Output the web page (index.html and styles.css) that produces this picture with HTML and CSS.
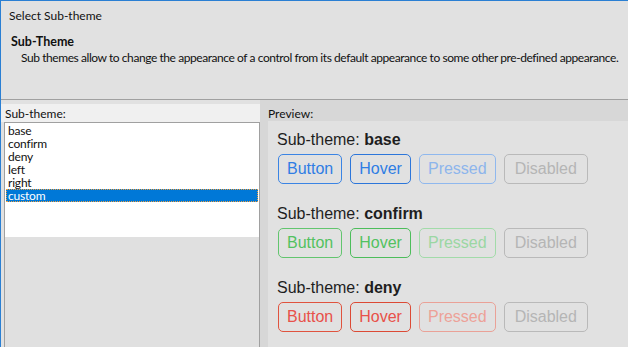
FILE: index.html
```html
<!DOCTYPE html>
<html>
<head>
<meta charset="utf-8">
<link rel="stylesheet" href="styles.css">
</head>
<body>
<div class="window">
  <header class="header">
    <div class="title">Select Sub-theme</div>
    <div class="heading">Sub-Theme</div>
    <div class="desc">Sub themes allow to change the appearance of a control from its default appearance to some other pre-defined appearance.</div>
  </header>
  <main class="main">
    <section class="left">
      <div class="label">Sub-theme:</div>
      <div class="listframe">
        <ul class="list">
          <li class="item">base</li>
          <li class="item">confirm</li>
          <li class="item">deny</li>
          <li class="item">left</li>
          <li class="item">right</li>
          <li class="item selected">custom</li>
        </ul>
      </div>
    </section>
    <section class="right">
      <div class="plabel">Preview:</div>
      <div class="preview">
        <div class="group base">
          <div class="gtitle">Sub-theme: <b>base</b></div>
          <div class="buttons">
            <span class="btn">Button</span>
            <span class="btn hover">Hover</span>
            <span class="btn pressed">Pressed</span>
            <span class="btn disabled">Disabled</span>
          </div>
        </div>
        <div class="group confirm">
          <div class="gtitle">Sub-theme: <b>confirm</b></div>
          <div class="buttons">
            <span class="btn">Button</span>
            <span class="btn hover">Hover</span>
            <span class="btn pressed">Pressed</span>
            <span class="btn disabled">Disabled</span>
          </div>
        </div>
        <div class="group deny">
          <div class="gtitle">Sub-theme: <b>deny</b></div>
          <div class="buttons">
            <span class="btn">Button</span>
            <span class="btn hover">Hover</span>
            <span class="btn pressed">Pressed</span>
            <span class="btn disabled">Disabled</span>
          </div>
        </div>
      </div>
    </section>
  </main>
</div>
</body>
</html>
```
FILE: styles.css
```css
* { box-sizing: border-box; }
html, body { margin: 0; padding: 0; }
body {
  width: 628px;
  height: 347px;
  overflow: hidden;
  background: #e1e1e1;
  font-family: "Lato", "Noto Sans", sans-serif;
  font-size: 12px;
  color: #111;
}
.window {
  height: 347px;
  border-top: 1px solid #2a7fd3;
  border-left: 1px solid #2a7fd3;
  display: flex;
  flex-direction: column;
}
.header {
  height: 99px;
  flex: none;
  border-bottom: 1px solid #a0a0a0;
  background: #e1e1e1;
  line-height: 15px;
}
.title { padding: 7px 0 0 8px; }
.heading { margin-top: 11px; padding-left: 10px; font-weight: bold; font-size: 12.5px; }
.desc { margin-top: 1px; padding-left: 20px; white-space: nowrap; letter-spacing: -0.43px; }

.main { flex: 1; display: flex; min-height: 0; }
.left {
  width: 259px;
  flex: none;
  background: #e1e1e1;
  padding-top: 4px;
  display: flex;
  flex-direction: column;
}
.label {
  height: 18px;
  padding: 2px 0 0 4px;
  line-height: 15px;
  background: #f0f0f0;
}
.listframe {
  flex: 1;
  margin-left: 3px;
  border: 1px solid #a0a0a0;
  border-bottom: none;
  background: #e0e0e0;
}
.list {
  list-style: none;
  margin: 0;
  height: 114px;
  padding: 1px;
  background: #fff;
}
.item {
  height: 13px;
  line-height: 13px;
  padding-left: 2px;
  letter-spacing: -0.2px;
}
.item.selected {
  background: #0078d7;
  color: #fff;
  outline: 1px dotted #f0a040;
  outline-offset: -1px;
}

.right {
  flex: 1;
  background: #d7d7d7;
  padding-left: 8px;
  display: flex;
  flex-direction: column;
}
.plabel {
  height: 23px;
  padding-top: 6px;
  line-height: 15px;
}
.preview {
  flex: 1;
  background: #e1e1e1;
  padding: 9px 0 0 10px;
  font-family: "Liberation Sans", Arial, sans-serif;
  font-size: 16px;
}
.group { margin-bottom: 20px; }
.gtitle { line-height: 20px; color: #1e1e1e; margin-left: -1px; }
.gtitle b { font-weight: bold; }
.buttons { display: flex; gap: 8px; margin-top: 4px; }
.btn {
  height: 30px;
  line-height: 28px;
  padding: 0 8px;
  border: 1px solid;
  border-radius: 5px;
}
.base .btn { color: #2f7de4; border-color: #3a84e4; }
.base .btn.hover { color: #2f7de4; border-color: #2c76da; }
.base .btn.pressed { color: #8db5ec; border-color: #8fb8ee; }
.confirm .btn { color: #52c160; border-color: #62c56e; }
.confirm .btn.hover { color: #52c160; border-color: #4dbd5b; }
.confirm .btn.pressed { color: #9bd7a3; border-color: #a2dba9; }
.deny .btn { color: #e8514a; border-color: #e0533e; }
.deny .btn.hover { color: #e8514a; border-color: #dc4a35; }
.deny .btn.pressed { color: #eda198; border-color: #eaa197; }
.btn.disabled, .base .btn.disabled, .confirm .btn.disabled, .deny .btn.disabled {
  color: #b5b5b5;
  border-color: #b9b9b9;
  padding: 0 10px;
}
```
